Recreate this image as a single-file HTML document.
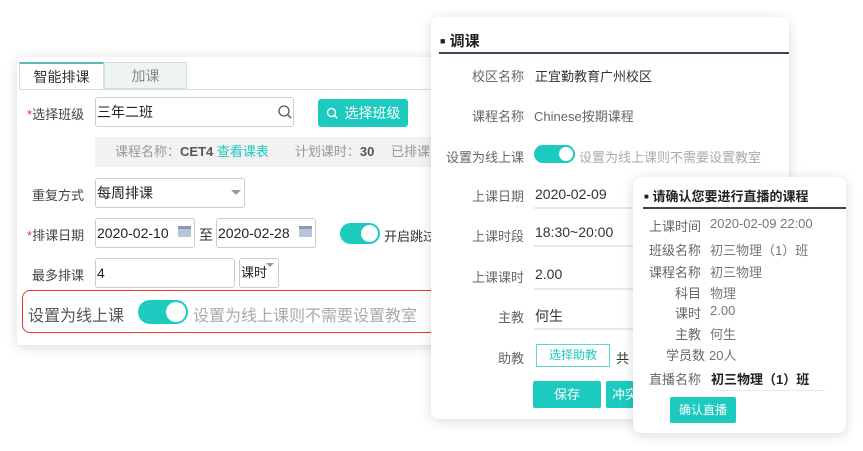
<!DOCTYPE html>
<html><head><meta charset="utf-8"><style>
*{margin:0;padding:0;box-sizing:border-box}
body{width:863px;height:451px;background:#fff;position:relative;overflow:hidden;font-family:"Liberation Sans","Noto Sans CJK SC",sans-serif;color:#333}
.a{position:absolute;white-space:nowrap}
.panel{position:absolute;background:#fff;border-radius:8px;box-shadow:0 2px 12px rgba(0,0,0,.15)}
.inp{position:absolute;border:1px solid #ccc;border-radius:3px;background:#fff;font-size:14px;padding-left:1px;line-height:28px;color:#222}
.tg{position:absolute;background:#1ccac0;border-radius:12px}
.tg i{position:absolute;right:2px;top:2px;background:#fff;border-radius:50%}
.btn{position:absolute;background:#1ccac0;color:#fff;text-align:center;border-radius:2px;font-size:13px}
.lb{font-size:13px;color:#444}
.red{color:#e33}
.ul{position:absolute;height:2px;background:#e8e8e8}
.cal{position:absolute;width:13px;height:11px;background:#b8c4d8;border-top:3px solid #8a9ab8}
.rl{font-size:13px;color:#666;text-align:right;width:60px}
</style></head><body>

<div class="panel" style="left:17px;top:57px;width:440px;height:288px;border-radius:4px"></div>
<div class="a" style="left:19px;top:62px;width:85px;height:28px;border:1px solid #d5dde0;border-top:2px solid #5bbab5;border-bottom:none;background:#fff;font-size:14px;text-align:center;line-height:26px">智能排课</div>
<div class="a" style="left:104px;top:62px;width:83px;height:27px;border:1px solid #d5dde0;background:#eef4f4;font-size:14px;text-align:center;line-height:26px;color:#888">加课</div>
<div class="a" style="left:19px;top:89px;width:430px;height:1px;background:#d5dde0"></div>

<div class="a lb" style="left:27px;top:104px"><span class="red">*</span>选择班级</div>
<div class="inp" style="left:95px;top:97px;width:199px;height:30px">三年二班</div>
<svg class="a" style="left:277px;top:104px" width="16" height="16" viewBox="0 0 16 16"><circle cx="7" cy="7" r="5" fill="none" stroke="#555" stroke-width="1.3"/><path d="M11 11l3 3" stroke="#555" stroke-width="1.5"/></svg>
<div class="btn" style="left:318px;top:99px;width:90px;height:28px;line-height:28px;font-size:14px;border-radius:3px"><svg style="vertical-align:-2px;margin-right:6px" width="13" height="13" viewBox="0 0 13 13"><circle cx="5.5" cy="5.5" r="4" fill="none" stroke="#fff" stroke-width="1.4"/><path d="M8.5 8.5l3 3" stroke="#fff" stroke-width="1.5"/></svg>选择班级</div>

<div class="a" style="left:95px;top:137px;width:340px;height:30px;background:#f2f2f2;font-size:13px;line-height:30px;color:#999;padding-left:20px">课程名称：<b style="color:#555">CET4</b> <span style="color:#1ccac0">查看课表</span>　　计划课时：<b style="color:#555">30</b>　 已排课时</div>

<div class="a lb" style="left:32px;top:185px">重复方式</div>
<div class="inp" style="left:95px;top:178px;width:150px;height:30px">每周排课</div>
<div class="a" style="left:231px;top:190px;border:5px solid transparent;border-top:5px solid #999"></div>

<div class="a lb" style="left:27px;top:225px"><span class="red">*</span>排课日期</div>
<div class="inp" style="left:95px;top:218px;width:100px;height:30px">2020-02-10</div>
<div class="cal" style="left:178px;top:226px"></div>
<div class="a" style="left:199px;top:225px;font-size:14px">至</div>
<div class="inp" style="left:216px;top:218px;width:100px;height:30px">2020-02-28</div>
<div class="cal" style="left:299px;top:226px"></div>
<div class="tg" style="left:340px;top:223px;width:40px;height:21px"><i style="width:17px;height:17px"></i></div>
<div class="a" style="left:384px;top:226px;font-size:13px">开启跳过</div>

<div class="a lb" style="left:32px;top:265px">最多排课</div>
<div class="inp" style="left:95px;top:258px;width:140px;height:30px">4</div>
<div class="inp" style="left:239px;top:258px;width:40px;height:30px;font-size:13px">课时</div>
<div class="a" style="left:266px;top:263px;border:4px solid transparent;border-top:4px solid #999"></div>

<div class="a" style="left:22px;top:290px;width:430px;height:43px;border:1px solid #e33;border-radius:8px"></div>
<div class="a" style="left:28px;top:302px;font-size:16px;color:#555">设置为线上课</div>
<div class="tg" style="left:138px;top:300px;width:50px;height:24px"><i style="width:20px;height:20px"></i></div>
<div class="a" style="left:193px;top:302px;font-size:16px;color:#aaa">设置为线上课则不需要设置教室</div>

<div class="panel" style="left:431px;top:17px;width:358px;height:402px"></div>
<div class="a" style="left:440px;top:30px;font-size:15px;font-weight:bold;color:#222"><span style="font-size:9px;vertical-align:2px">■</span> 调课</div>
<div class="a" style="left:439px;top:52px;width:350px;height:2px;background:#3a4658"></div>
<div class="a lb" style="left:440px;top:66px;width:84px;text-align:right;color:#666">校区名称</div>
<div class="a" style="left:535px;top:66px;font-size:13px">正宜勤教育广州校区</div>
<div class="a lb" style="left:440px;top:106px;width:84px;text-align:right;color:#666">课程名称</div>
<div class="a" style="left:534px;top:106px;font-size:13px;color:#666">Chinese按期课程</div>
<div class="a lb" style="left:440px;top:147px;width:84px;text-align:right;color:#666">设置为线上课</div>
<div class="tg" style="left:534px;top:145px;width:41px;height:18px"><i style="width:14px;height:14px"></i></div>
<div class="a" style="left:579px;top:147px;font-size:13px;color:#aaa">设置为线上课则不需要设置教室</div>
<div class="a lb" style="left:440px;top:186px;width:84px;text-align:right;color:#666">上课日期</div>
<div class="a" style="left:535px;top:186px;font-size:14px">2020-02-09</div>
<div class="ul" style="left:534px;top:207px;width:100px"></div>
<div class="a lb" style="left:440px;top:226px;width:84px;text-align:right;color:#666">上课时段</div>
<div class="a" style="left:535px;top:224px;font-size:14px">18:30~20:00</div>
<div class="ul" style="left:534px;top:245px;width:100px"></div>
<div class="a lb" style="left:440px;top:267px;width:84px;text-align:right;color:#666">上课课时</div>
<div class="a" style="left:535px;top:266px;font-size:14px">2.00</div>
<div class="ul" style="left:534px;top:288px;width:100px"></div>
<div class="a lb" style="left:440px;top:307px;width:84px;text-align:right;color:#666">主教</div>
<div class="a" style="left:535px;top:306px;font-size:14px">何生</div>
<div class="ul" style="left:534px;top:328px;width:100px"></div>
<div class="a lb" style="left:440px;top:348px;width:84px;text-align:right;color:#666">助教</div>
<div class="a" style="left:536px;top:344px;width:74px;height:23px;border:1px solid #5fd8d0;color:#1ccac0;font-size:12px;text-align:center;line-height:21px">选择助教</div>
<div class="a" style="left:616px;top:348px;font-size:13px">共</div>
<div class="btn" style="left:533px;top:381px;width:68px;height:27px;line-height:27px">保存</div>
<div class="btn" style="left:606px;top:381px;width:40px;height:27px;line-height:27px;text-align:left;padding-left:6px">冲突</div>

<div class="panel" style="left:633px;top:177px;width:213px;height:256px"></div>
<div class="a" style="left:644px;top:186px;font-size:13px;font-weight:bold;color:#222"><span style="font-size:8px;vertical-align:2px">■</span> 请确认您要进行直播的课程</div>
<div class="a" style="left:643px;top:207px;width:203px;height:2px;background:#3a4658"></div>
<div class="a rl" style="left:641px;top:216px">上课时间</div><div class="a" style="left:710px;top:216px;font-size:13px;color:#777">2020-02-09 22:00</div>
<div class="a rl" style="left:641px;top:240px">班级名称</div><div class="a" style="left:710px;top:240px;font-size:13px;color:#777">初三物理（1）班</div>
<div class="a rl" style="left:641px;top:262px">课程名称</div><div class="a" style="left:710px;top:262px;font-size:13px;color:#777">初三物理</div>
<div class="a rl" style="left:641px;top:283px">科目</div><div class="a" style="left:710px;top:283px;font-size:13px;color:#777">物理</div>
<div class="a rl" style="left:641px;top:303px">课时</div><div class="a" style="left:710px;top:303px;font-size:13px;color:#777">2.00</div>
<div class="a rl" style="left:641px;top:324px">主教</div><div class="a" style="left:710px;top:324px;font-size:13px;color:#777">何生</div>
<div class="a rl" style="left:645px;top:345px">学员数</div><div class="a" style="left:709px;top:345px;font-size:13px;color:#777">20人</div>
<div class="a rl" style="left:641px;top:369px">直播名称</div><div class="a" style="left:711px;top:369px;font-size:13px;color:#222;font-weight:bold">初三物理（1）班</div>
<div class="ul" style="left:711px;top:390px;width:114px;height:1px"></div>
<div class="btn" style="left:670px;top:397px;width:66px;height:26px;line-height:26px;font-size:12px">确认直播</div>
</body></html>
